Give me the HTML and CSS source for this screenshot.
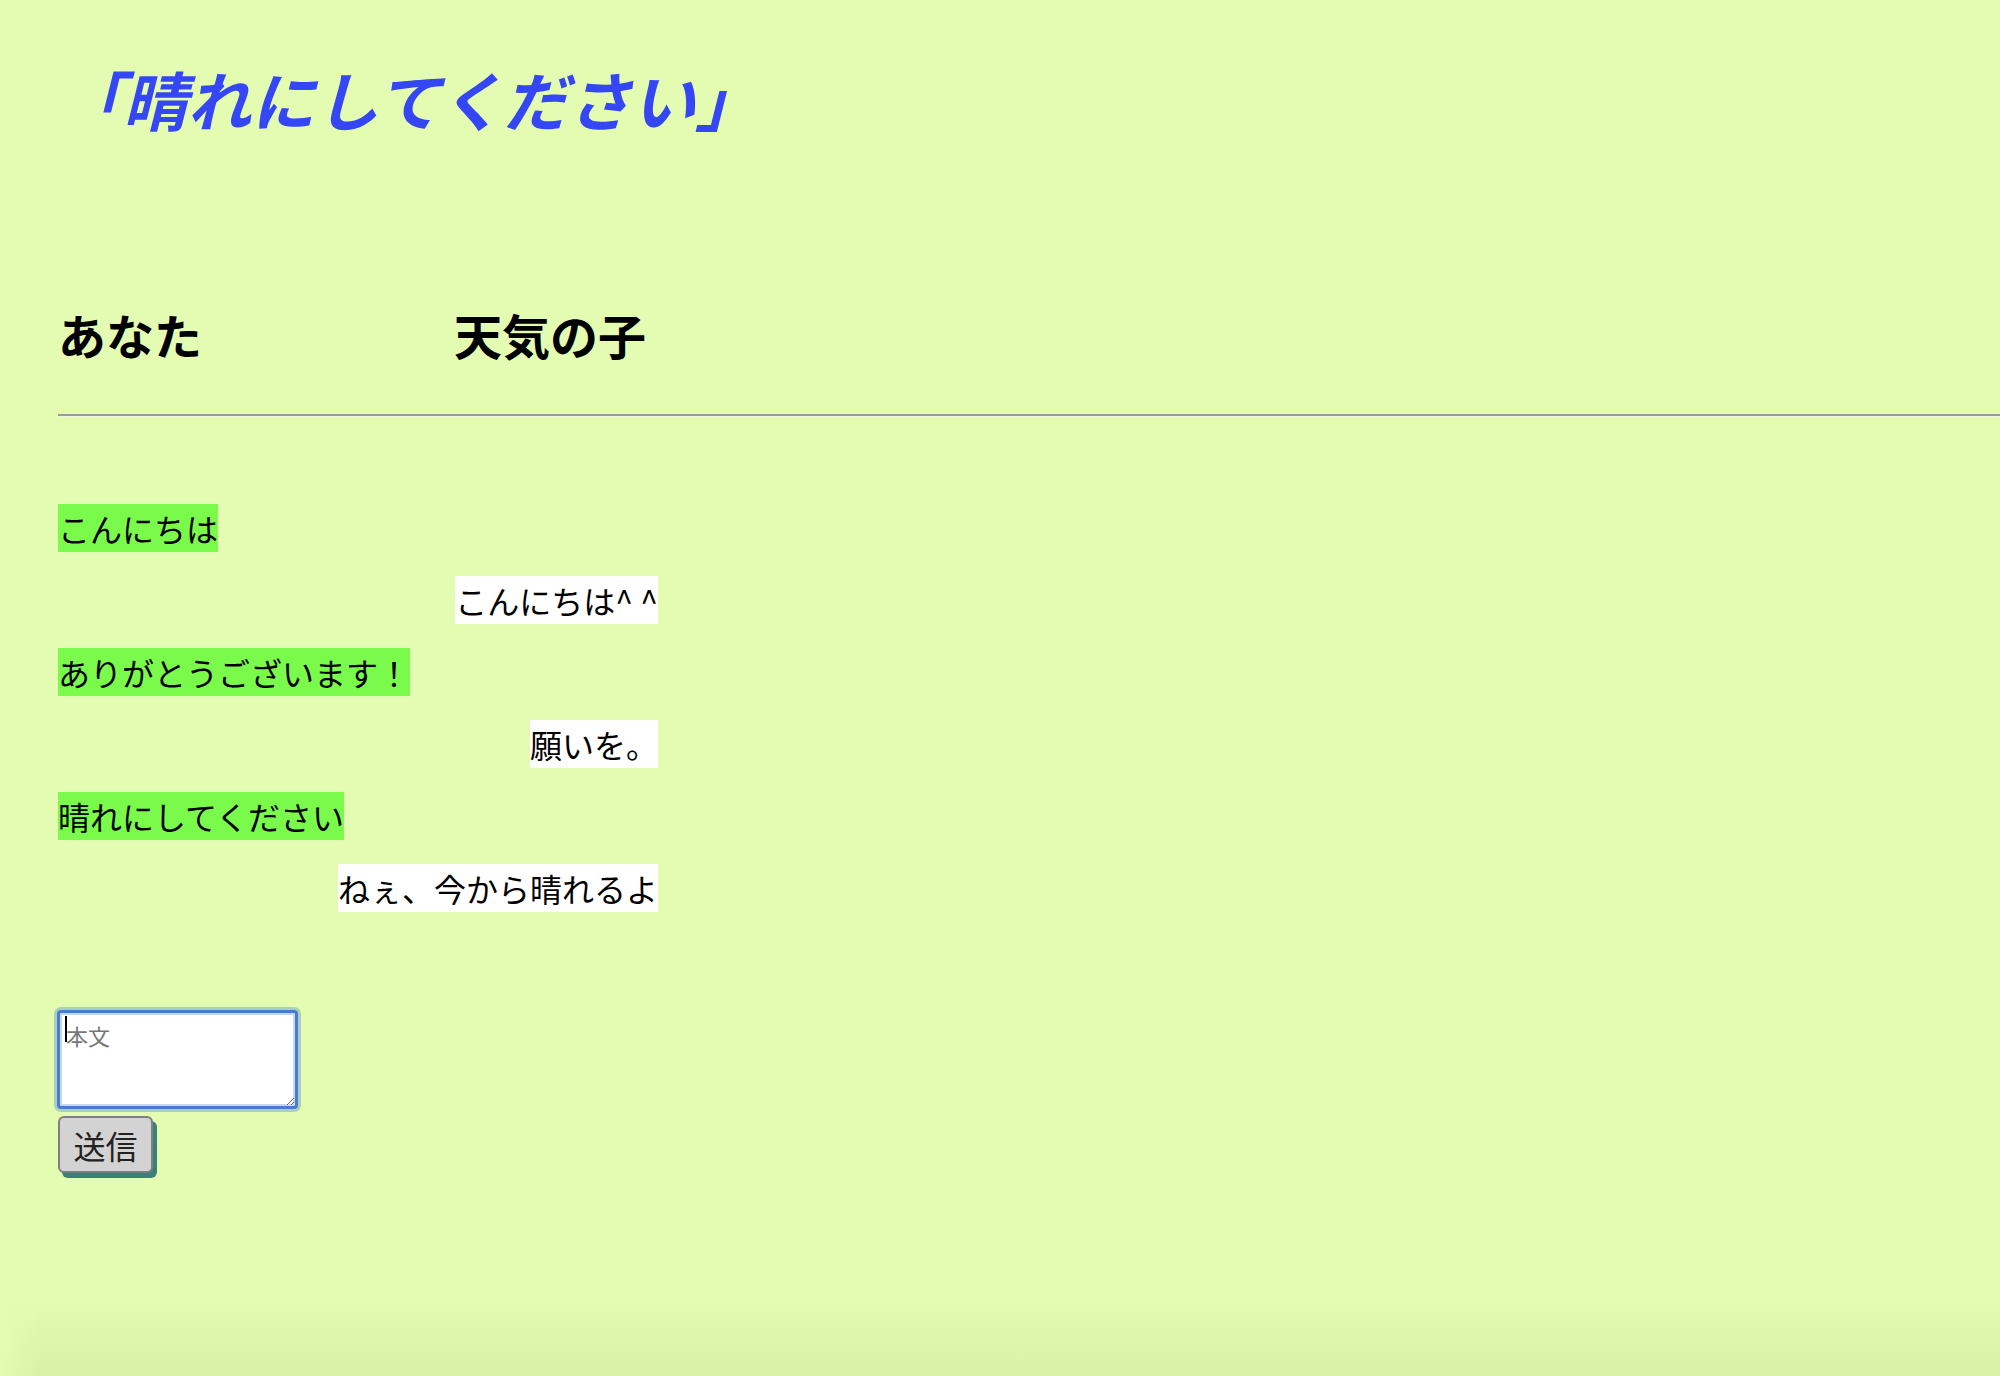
FILE: index.html
```html
<!DOCTYPE html>
<html lang="ja">
<head>
<meta charset="utf-8">
<title>晴れにしてください</title>
<link rel="stylesheet" href="styles.css">
</head>
<body>
<h1 class="title">「晴れにしてください」</h1>
<div class="heads">
  <h2 class="head head-you">あなた</h2>
  <h2 class="head">天気の子</h2>
</div>
<hr class="rule">
<div class="chat">
  <span class="msg msg-you">こんにちは</span>
  <span class="msg msg-them">こんにちは^ ^</span>
  <span class="msg msg-you">ありがとうございます！</span>
  <span class="msg msg-them">願いを。</span>
  <span class="msg msg-you">晴れにしてください</span>
  <span class="msg msg-them">ねぇ、今から晴れるよ</span>
</div>
<form class="form">
  <div class="field">
    <textarea class="input" placeholder="本文"></textarea>
    <span class="caret"></span>
  </div>
  <button type="button" class="send">送信</button>
</form>
<div class="fade"></div>
</body>
</html>
```

FILE: styles.css
```css
html, body {
  margin: 0;
  padding: 0;
}
body {
  background: #e4fcb2;
  font-family: "Noto Sans CJK JP", "Noto Sans", sans-serif;
  color: #000;
  padding-left: 58px;
  min-height: 1376px;
  box-sizing: border-box;
  overflow: hidden;
}
.title {
  margin: 0;
  padding: 50px 0 0 1px;
  font-size: 64px;
  line-height: 96px;
  font-weight: 700;
  font-style: italic;
  color: #3547f5;
  letter-spacing: 0;
}
.heads {
  display: flex;
  margin-top: 152px;
}
.head {
  margin: 0;
  font-size: 48px;
  line-height: 72px;
  font-weight: 700;
}
.head-you {
  width: 396px;
}
.rule {
  margin: 44px 0 0 0;
  border: 0;
  border-top: 2px solid #9a9a9a;
  border-bottom: 1px solid #eef2e6;
  height: 0;
}
.chat {
  width: 600px;
  display: flex;
  flex-direction: column;
  gap: 24px;
  margin-top: 87px;
}
.msg {
  font-size: 32px;
  line-height: 48px;
  height: 48px;
  white-space: nowrap;
}
.msg-you {
  align-self: flex-start;
  background: #7afb4c;
}
.msg-them {
  align-self: flex-end;
  background: #ffffff;
}
.form {
  margin-top: 98px;
  display: flex;
  flex-direction: column;
  align-items: flex-start;
}
.field {
  position: relative;
  width: 241px;
  height: 99px;
  margin-left: -1px;
}
.input {
  display: block;
  box-sizing: border-box;
  width: 241px;
  height: 99px;
  margin: 0;
  padding: 8px 6px;
  border: 3px solid #4a7bd3;
  border-radius: 4px;
  box-shadow: inset 0 0 0 2px #c6d7f6, 0 0 0 3px rgba(120, 170, 205, 0.55);
  background: #fff;
  font-family: "Noto Sans CJK JP", "Noto Sans", sans-serif;
  font-size: 22px;
  line-height: 28px;
  outline: none;
  color: #000;
}
.input::placeholder {
  color: #777;
}
.caret {
  position: absolute;
  left: 8px;
  top: 6px;
  width: 2px;
  height: 26px;
  background: #000;
}
.send {
  box-sizing: border-box;
  margin-top: 7px;
  width: 95px;
  height: 57px;
  padding: 0;
  border: 2px solid #7f7f7f;
  border-radius: 6px;
  background: #d3d3d3;
  box-shadow: 4px 5px 0 #3d7f78;
  font-family: "Noto Sans CJK JP", "Noto Sans", sans-serif;
  font-size: 32px;
  line-height: 48px;
  color: #222;
}
.fade {
  position: fixed;
  left: 0;
  right: 0;
  bottom: 0;
  height: 80px;
  background: linear-gradient(to bottom, rgba(70, 90, 0, 0) 0%, rgba(70, 90, 0, 0.07) 100%);
  -webkit-mask-image: linear-gradient(to right, transparent 0, #000 40px);
  mask-image: linear-gradient(to right, transparent 0, #000 40px);
  pointer-events: none;
}
```
